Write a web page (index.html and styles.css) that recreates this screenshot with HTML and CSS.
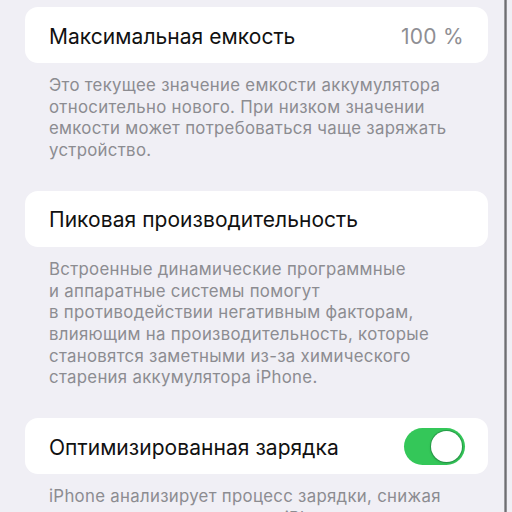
FILE: index.html
```html
<!DOCTYPE html>
<html lang="ru">
<head>
    <meta charset="UTF-8">
    <meta name="viewport" content="width=device-width, initial-scale=1.0">
    <title>Состояние аккумулятора</title>
    <link rel="stylesheet" href="styles.css">
</head>
<body>
    <div class="screen">
        <div class="settings">
            <div class="group">
                <div class="cell">
                    <span class="cell-title">Максимальная емкость</span>
                    <span class="cell-value">100 %</span>
                </div>
                <p class="footer">Это текущее значение емкости аккумулятора<br>относительно нового. При низком значении<br>емкости может потребоваться чаще заряжать<br>устройство.</p>
            </div>

            <div class="group">
                <div class="cell">
                    <span class="cell-title">Пиковая производительность</span>
                </div>
                <p class="footer">Встроенные динамические программные<br>и аппаратные системы помогут<br>в противодействии негативным факторам,<br>влияющим на производительность, которые<br>становятся заметными из-за химического<br>старения аккумулятора iPhone.</p>
            </div>

            <div class="group">
                <div class="cell">
                    <span class="cell-title">Оптимизированная зарядка</span>
                    <span class="switch is-on" role="switch" aria-checked="true"><span class="knob"></span></span>
                </div>
                <p class="footer">iPhone анализирует процесс зарядки, снижая<br>износ аккумулятора, когда iPhone заряжается.</p>
            </div>
        </div>
        <div class="edge"></div>
    </div>
</body>
</html>
```

FILE: styles.css
```css
* {
    box-sizing: border-box;
}

html, body {
    margin: 0;
    height: 100%;
    overflow: hidden;
}

body {
    background: #f0eff5;
    font-family: Inter, "Noto Sans", sans-serif;
    -webkit-font-smoothing: antialiased;
}

.screen {
    display: flex;
    height: 512px;
}

.settings {
    width: 504px;
    padding: 7px 16px 0 25px;
}

.group {
    margin-bottom: 29px;
}

.cell {
    display: flex;
    align-items: center;
    justify-content: space-between;
    height: 56px;
    padding: 2px 24px 0;
    background: #fff;
    border-radius: 13px;
}

.cell-title {
    font-size: 21px;
    color: #111;
    letter-spacing: 0.05px;
}

.cell-value {
    font-size: 21px;
    color: #8e8e93;
    letter-spacing: 0.3px;
}

.footer {
    margin: 0;
    padding: 12px 24px 0;
    font-size: 16.8px;
    line-height: 21.7px;
    color: #8c8c91;
    letter-spacing: 0.3px;
    white-space: nowrap;
}

/* Toggle */
.switch {
    position: relative;
    width: 61px;
    height: 37px;
    border-radius: 19px;
    background: #d9d9de;
    margin-right: -1px;
    margin-top: -2px;
}

.switch.is-on {
    background: #34c759;
}

.knob {
    position: absolute;
    top: 3px;
    left: 3px;
    width: 31px;
    height: 31px;
    border-radius: 50%;
    background: #fff;
    box-shadow: 0 0 0 1px rgba(30, 120, 60, 0.5), 0 1px 3px rgba(0, 0, 0, 0.2);
}

.switch.is-on .knob {
    left: 27px;
}

.edge {
    width: 3px;
    background: linear-gradient(to right, #b0b0b4, #6e6e72, #a6a6aa);
}
```
